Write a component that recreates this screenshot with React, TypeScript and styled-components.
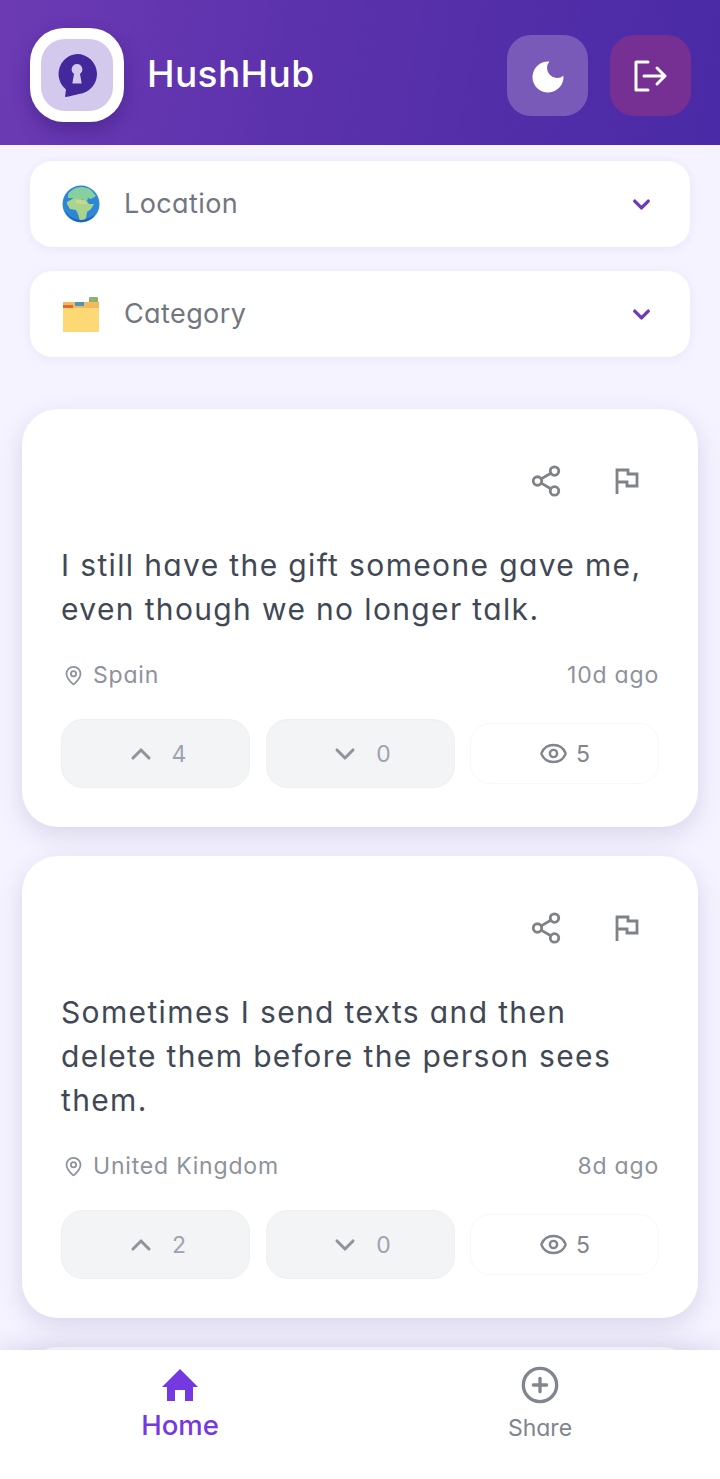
import React from 'react'
import styled, { createGlobalStyle } from 'styled-components'
import { ChevronDown, ChevronUp, CirclePlus, Eye, MapPin, Share2 } from 'lucide-react'

const posts = [
  { id: 1, text: 'I still have the gift someone gave me, even though we no longer talk.', place: 'Spain', age: '10d ago', up: 4, down: 0, views: 5 },
  { id: 2, text: 'Sometimes I send texts and then delete them before the person sees them.', place: 'United Kingdom', age: '8d ago', up: 2, down: 0, views: 5 },
]

const GlobeIcon = () => (
  <svg width="38" height="38" viewBox="0 0 38 38">
    <circle cx="19" cy="19" r="18.5" fill="#2f86d6" />
    <path d="M6 9c3-4 8-7 13-7 4 0 8 1 11 4l4 5-5 3-3-1-1 3-5-2-5 1-5-2-4 0z" fill="#86cf9f" />
    <path d="M5 17l7-4 6 1 6 1 3 4 5 0-3 5-4 3-1 6-3 3-3 0-2-7-2-4-6-1-3-5z" fill="#a8d48c" />
    <path d="M14 15l4 0 5 1 2 3-6 0-5-1z" fill="#cfd694" />
    <path d="M3 26c3 6 9 11 16 11 6 0 11-3 14-7-4 2-9 5-14 5-7 0-12-4-16-9z" fill="#1d62b8" />
  </svg>
)

const FolderIcon = () => (
  <svg width="38" height="38" viewBox="0 0 38 38">
    <rect x="27" y="2" width="9" height="6" rx="1" fill="#8fb26a" />
    <rect x="1" y="7" width="36" height="7" fill="#f3b95f" />
    <rect x="13" y="7" width="9" height="4" fill="#4a95b8" />
    <rect x="1" y="10" width="10" height="4" fill="#dd6a35" />
    <rect x="1" y="13" width="36" height="24" fill="#fdd976" />
  </svg>
)

const LogoMark = () => (
  <svg width="42" height="44" viewBox="0 0 42 44">
    <path fillRule="evenodd" fill="#43289b" d="M21 1a20 20 0 0 1 2 39.900c-3 .6-9 2.600-14 3.100l1-7.500A20 20 0 0 1 21 1zM21 11a5.500 5.500 0 0 0-3 10l-1.700 9.500h9.400L24 21a5.500 5.500 0 0 0-3-10z" />
  </svg>
)

const MoonIcon = () => (
  <svg width="34" height="34" viewBox="0 0 34 34">
    <path fill="#fff" d="M18.350 2.570A15.500 15.500 0 1 0 32.430 16.650A10 10 0 0 1 18.350 2.570z" />
  </svg>
)

const LogoutIcon = () => (
  <svg width="36" height="34" viewBox="0 0 36 34" fill="none" stroke="#fff" strokeWidth="3" strokeLinecap="round" strokeLinejoin="round">
    <path d="M15 3H3v28h12" />
    <path d="M11 17h21M24 9l8 8-8 8" />
  </svg>
)

const FlagIcon = () => (
  <svg width="26" height="28" viewBox="0 0 26 28" fill="none" stroke="#7f8388" strokeWidth="2.800" strokeLinejoin="miter">
    <path d="M3 27V3h11v4h9v12H13v-4H3" />
  </svg>
)

const HomeIcon = () => (
  <svg width="36" height="32" viewBox="0 0 36 32">
    <path fill="#7439e0" d="M18 0l18 18h-5v14h-8V21h-10v11H5V18H0z" />
  </svg>
)

const GlobalStyle = createGlobalStyle`
  html, body {
    margin: 0;
    padding: 0;
  }
  body {
    font-family: Inter, "Liberation Sans", sans-serif;
    font-feature-settings: "cv11" 1;
    background: #f5f3ff;
  }
  * {
    box-sizing: border-box;
  }
`

const Page = styled.div`
  width: 720px;
  height: 1479px;
  display: flex;
  flex-direction: column;
  overflow: hidden;
  background: #f5f3ff;
`

const Header = styled.header`
  flex: none;
  height: 145px;
  padding: 4px 29px 0 30px;
  display: flex;
  align-items: center;
  justify-content: space-between;
  background: linear-gradient(100deg, #6c3bb4 0%, #5a31ab 45%, #4a2aa6 100%);
`

const Brand = styled.div`
  display: flex;
  align-items: center;
  gap: 23px;
`

const LogoBox = styled.div`
  width: 94px;
  height: 94px;
  padding: 11px;
  border-radius: 34px;
  background: #fff;
  box-shadow: 0 8px 18px rgba(40, 15, 100, 0.35);
`

const LogoInner = styled.div`
  width: 72px;
  height: 72px;
  border-radius: 24px;
  background: #d3c9ec;
  display: flex;
  align-items: center;
  justify-content: center;
`

const Title = styled.h1`
  margin: -2px 0 0;
  color: #fff;
  font-size: 37px;
  font-weight: 500;
  letter-spacing: 0.4px;
`

const HeaderActions = styled.div`
  display: flex;
  gap: 22px;
  margin-top: 2px;
`

const HeaderButton = styled.button<{ $danger?: boolean }>`
  width: 81px;
  height: 81px;
  padding: 0;
  border: 0;
  border-radius: 24px;
  display: flex;
  align-items: center;
  justify-content: center;
  background: ${(p) => (p.$danger ? '#762f92' : '#7a5ab9')};
`

const Main = styled.main`
  flex: 1;
  min-height: 0;
  overflow: hidden;
  padding-top: 16px;
`

const Filters = styled.div`
  padding: 0 30px;
  display: flex;
  flex-direction: column;
  gap: 24px;
`

const Select = styled.div`
  height: 86px;
  padding: 0 35px 0 32px;
  display: flex;
  align-items: center;
  border-radius: 22px;
  background: #fff;
  box-shadow: 0 2px 10px rgba(90, 70, 170, 0.08);
`

const SelectLabel = styled.span`
  flex: 1;
  margin: -2px 0 0 24px;
  color: #72767f;
  font-size: 27px;
  letter-spacing: 0.4px;
`

const Feed = styled.div`
  margin-top: 52px;
  padding: 0 22px;
  display: flex;
  flex-direction: column;
  gap: 29px;
`

const Card = styled.article<{ $peek?: boolean }>`
  flex: none;
  padding: 39px;
  border-radius: 36px;
  background: #fff;
  box-shadow: 0 8px 24px rgba(70, 60, 130, 0.16);
  height: ${(p) => (p.$peek ? '200px' : 'auto')};
`

const CardTools = styled.div`
  height: 64px;
  display: flex;
  justify-content: flex-end;
  align-items: center;
  gap: 51px;
  padding-right: 19px;
  color: #7f8388;
  margin-top: 1px;
`

const CardText = styled.p`
  margin: 30px 0 0;
  color: #414855;
  font-size: 30px;
  line-height: 44px;
  letter-spacing: 1.36px;
`

const Meta = styled.div`
  margin-top: 22px;
  height: 44px;
  display: flex;
  align-items: center;
  justify-content: space-between;
  color: #8d929b;
  font-size: 23px;
  letter-spacing: 0.8px;
`

const Place = styled.span`
  display: flex;
  align-items: center;
  gap: 9px;
  padding-left: 2px;
`

const Stats = styled.div`
  margin-top: 22px;
  display: grid;
  grid-template-columns: repeat(3, 1fr);
  column-gap: 15.5px;
  align-items: center;
`

const VoteButton = styled.div`
  height: 69px;
  display: flex;
  align-items: center;
  justify-content: center;
  gap: 15px;
  border-radius: 22px;
  border: 1px solid #edeff2;
  background: #f3f4f6;
  color: #9ca3af;
  font-size: 23px;
`

const Views = styled.div`
  height: 61px;
  display: flex;
  align-items: center;
  justify-content: center;
  gap: 8px;
  border-radius: 20px;
  border: 1px solid #f8f8fa;
  color: #80858e;
  font-size: 23px;
`

const BottomNav = styled.nav`
  flex: none;
  height: 129px;
  display: grid;
  grid-template-columns: 1fr 1fr;
  background: #fff;
  box-shadow: 0 -6px 20px rgba(70, 60, 130, 0.12);
  position: relative;
`

const NavItem = styled.div<{ $active?: boolean }>`
  display: flex;
  flex-direction: column;
  align-items: center;
  padding-top: ${(p) => (p.$active ? '19px' : '15px')};
  gap: ${(p) => (p.$active ? '7px' : '9px')};
  color: ${(p) => (p.$active ? '#7439e0' : '#80858e')};
  font-size: ${(p) => (p.$active ? '27.5px' : '23px')};
  font-weight: ${(p) => (p.$active ? 500 : 400)};
`

export default function App() {
  return (
    <Page>
      <GlobalStyle />
      <Header>
        <Brand>
          <LogoBox>
            <LogoInner>
              <LogoMark />
            </LogoInner>
          </LogoBox>
          <Title>HushHub</Title>
        </Brand>
        <HeaderActions>
          <HeaderButton>
            <MoonIcon />
          </HeaderButton>
          <HeaderButton $danger>
            <LogoutIcon />
          </HeaderButton>
        </HeaderActions>
      </Header>
      <Main>
        <Filters>
          <Select>
            <GlobeIcon />
            <SelectLabel>Location</SelectLabel>
            <ChevronDown size={27} color="#6d3bb8" strokeWidth={3} />
          </Select>
          <Select>
            <FolderIcon />
            <SelectLabel>Category</SelectLabel>
            <ChevronDown size={27} color="#6d3bb8" strokeWidth={3} />
          </Select>
        </Filters>
        <Feed>
          {posts.map((post) => (
            <Card key={post.id}>
              <CardTools>
                <Share2 size={34} strokeWidth={2} />
                <FlagIcon />
              </CardTools>
              <CardText>{post.text}</CardText>
              <Meta>
                <Place>
                  <MapPin size={21} strokeWidth={2} />
                  {post.place}
                </Place>
                <span>{post.age}</span>
              </Meta>
              <Stats>
                <VoteButton>
                  <ChevronUp size={32} color="#8f949c" strokeWidth={2.3} />
                  {post.up}
                </VoteButton>
                <VoteButton>
                  <ChevronDown size={32} color="#8f949c" strokeWidth={2.3} />
                  {post.down}
                </VoteButton>
                <Views>
                  <Eye size={29} strokeWidth={2} />
                  {post.views}
                </Views>
              </Stats>
            </Card>
          ))}
          <Card $peek />
        </Feed>
      </Main>
      <BottomNav>
        <NavItem $active>
          <HomeIcon />
          Home
        </NavItem>
        <NavItem>
          <CirclePlus size={40} strokeWidth={2} />
          Share
        </NavItem>
      </BottomNav>
    </Page>
  )
}
